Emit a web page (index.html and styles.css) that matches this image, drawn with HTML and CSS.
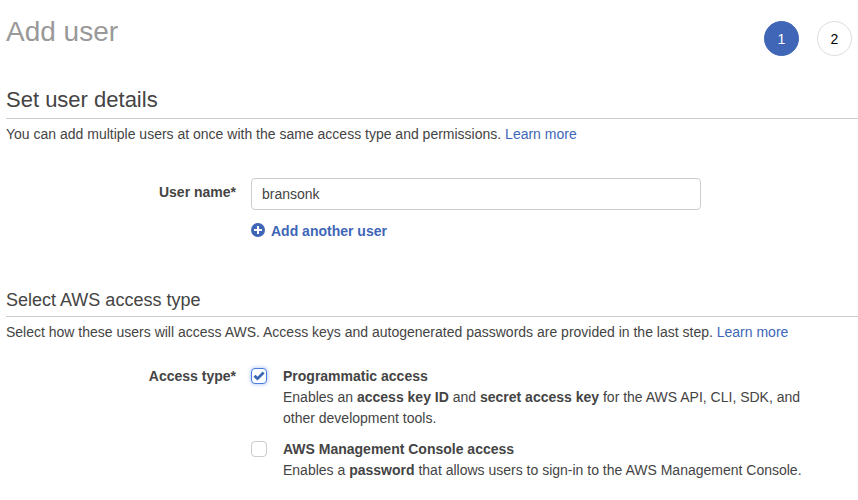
FILE: index.html
```html
<!DOCTYPE html>
<html lang="en">
<head>
<meta charset="utf-8">
<title>Add user</title>
<link rel="stylesheet" href="styles.css">
</head>
<body>
<header class="page-header">
  <h1>Add user</h1>
  <ol class="steps">
    <li class="step step-current" aria-current="step">1</li>
    <li class="step">2</li>
  </ol>
</header>
<main>
  <form>
    <section class="details">
      <h2>Set user details</h2>
      <p class="intro">You can add multiple users at once with the same access type and permissions. <a href="#">Learn more</a></p>
      <div class="row">
        <label class="row-label name-label" for="username">User name*</label>
        <div class="row-body">
          <input class="text-input" id="username" type="text" value="bransonk">
          <button class="add-button" type="button">
            <svg class="add-icon" width="14" height="14" viewBox="0 0 14 14" aria-hidden="true"><circle cx="7" cy="7" r="7" fill="#4066b8"/><path d="M7 3v8M3 7h8" stroke="#fff" stroke-width="2"/></svg>
            Add another user
          </button>
        </div>
      </div>
    </section>
    <section>
      <h3>Select AWS access type</h3>
      <p class="intro">Select how these users will access AWS. Access keys and autogenerated passwords are provided in the last step. <a href="#">Learn more</a></p>
      <div class="row access-row" role="group" aria-labelledby="access-label">
        <span class="row-label" id="access-label">Access type*</span>
        <div class="row-body options">
          <div class="option">
            <span class="check"><input type="checkbox" id="programmatic" aria-describedby="programmatic-info" checked><svg class="tick" width="12" height="12" viewBox="0 0 12 12" aria-hidden="true"><path d="M0.500 6.700L2.500 4.700L4.500 6.700L9.700 1.500L11.600 3.400L4.500 10.600Z" fill="#3b64b4"/></svg></span>
            <div>
              <label class="option-title" for="programmatic">Programmatic access</label>
              <p id="programmatic-info">Enables an <strong>access key ID</strong> and <strong>secret access key</strong> for the AWS API, CLI, SDK, and other development tools.</p>
            </div>
          </div>
          <div class="option">
            <span class="check"><input type="checkbox" id="console" aria-describedby="console-info"></span>
            <div>
              <label class="option-title" for="console">AWS Management Console access</label>
              <p id="console-info">Enables a <strong>password</strong> that allows users to sign-in to the AWS Management Console.</p>
            </div>
          </div>
        </div>
      </div>
    </section>
  </form>
</main>
</body>
</html>
```
FILE: styles.css
```css
* { box-sizing: border-box; }
body {
  margin: 0;
  padding: 12px 0 0 6px;
  background: #fff;
  color: #444;
  font: 14px/21px "Liberation Sans", Arial, sans-serif;
}
h1, h2, h3, p, ol { margin: 0; padding: 0; font-weight: 400; }
a { color: #4066b8; text-decoration: none; }
.page-header {
  display: flex;
  justify-content: space-between;
  padding-right: 6px;
}
h1 { color: #999; font-size: 28px; line-height: 40px; }
.steps { display: flex; gap: 18px; padding-top: 9px; list-style: none; }
.step {
  width: 35px;
  height: 35px;
  border: 1px solid #ddd;
  border-radius: 50%;
  color: #000;
  line-height: 34px;
  text-align: center;
}
.step-current { border-color: #4066b8; background: #4066b8; color: #fff; }
h2, h3 { border-bottom: 1px solid #ccc; color: #444; }
h2 { padding: 27px 0 2px; font-size: 22px; line-height: 33px; }
h3 { padding-top: 2px; font-size: 18px; line-height: 31px; }
.intro { padding-top: 5px; }
.details { padding-bottom: 41px; }
.row { display: flex; gap: 15px; padding-top: 33px; }
.row-label { width: 230px; flex: none; font-weight: 700; text-align: right; }
.name-label { padding-top: 4px; }
.row-body { flex: 1; min-width: 0; }
.text-input {
  display: block;
  width: 100%;
  max-width: 450px;
  height: 32px;
  padding: 0 10px;
  border: 1px solid #ccc;
  border-radius: 4px;
  color: #444;
  font: inherit;
}
.add-button {
  display: flex;
  align-items: flex-start;
  gap: 6px;
  margin-top: 11px;
  padding: 0;
  border: 0;
  background: none;
  color: #4066b8;
  font: inherit;
  font-weight: 700;
}
.add-icon { margin-top: 2px; }
.access-row { padding-top: 23px; }
.options { display: grid; gap: 10px; }
.option { display: flex; gap: 16px; max-width: 570px; }
.option-title { display: block; font-weight: 700; }
.check { display: grid; flex: none; width: 16px; height: 20px; place-items: center; }
.check > * { grid-area: 1 / 1; }
.check input {
  width: 16px;
  height: 16px;
  margin: 0;
  border: 1px solid #ccc;
  border-radius: 4px;
  appearance: none;
  background: #fff;
}
.check input:checked { border-color: #4a7be0; box-shadow: 0 0 4px #9dbcf5; }
.tick { pointer-events: none; }
```
